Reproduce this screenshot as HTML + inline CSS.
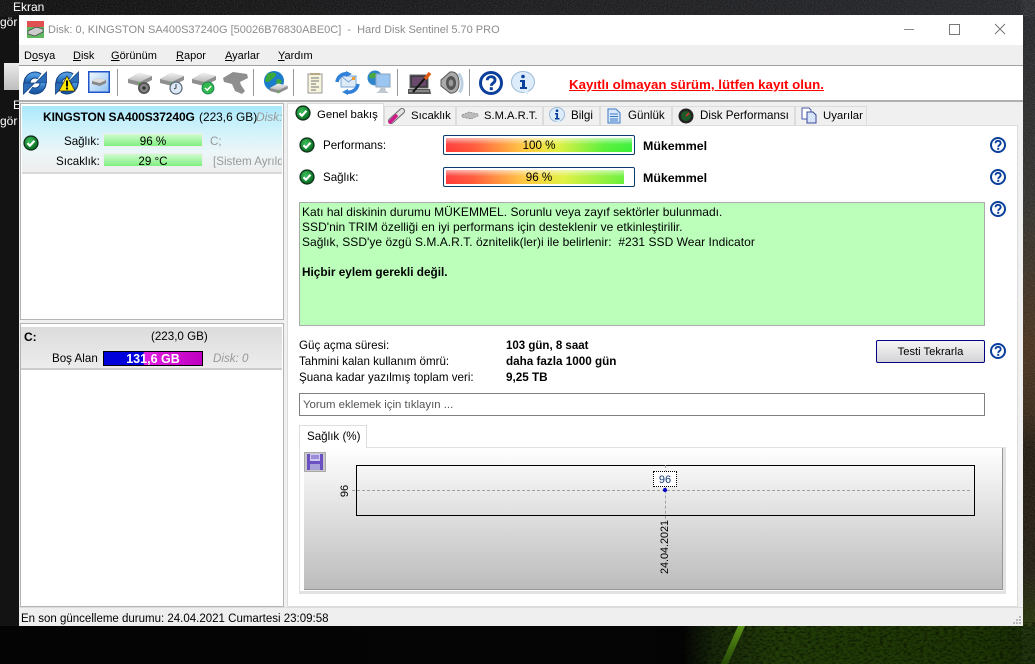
<!DOCTYPE html>
<html><head><meta charset="utf-8"><style>
html,body{margin:0;padding:0}
body{width:1035px;height:664px;overflow:hidden;position:relative;background:#0c0c0c;font-family:"Liberation Sans",sans-serif;font-size:11.6px;color:#000}
.a,.t,svg.i{position:absolute}
.t{white-space:nowrap;line-height:16px}
.l{line-height:14px}
.b{font-weight:bold}
.m{font-size:11px;top:48px}
.g{font-size:12px;letter-spacing:.03px;line-height:14px}
u{text-decoration:underline}
.tab{position:absolute;top:106px;height:19px;background:#f0f0f0;border:1px solid #dcdcdc;border-bottom:0;box-sizing:border-box}
</style></head><body>
<svg width="0" height="0" style="position:absolute"><defs>
<radialGradient id="gc" cx=".4" cy=".35" r=".7"><stop offset="0" stop-color="#3cc05a"/><stop offset="1" stop-color="#066a1e"/></radialGradient>
<linearGradient id="hd" x1="0" y1="0" x2="0" y2="1"><stop offset="0" stop-color="#f0f0f0"/><stop offset="1" stop-color="#b8b8b8"/></linearGradient>
<linearGradient id="bl" x1="0" y1="0" x2="0" y2="1"><stop offset="0" stop-color="#4f9ae0"/><stop offset="1" stop-color="#1a5aa6"/></linearGradient>
<linearGradient id="st" x1="0" y1="0" x2="0" y2="1"><stop offset="0" stop-color="#5a9216"/><stop offset="1" stop-color="#264806"/></linearGradient>
<g id="ok"><circle cx="8" cy="8" r="7.6" fill="#10301a"/><circle cx="8" cy="8" r="6.3" fill="url(#gc)"/><path d="M4.4 8.2l2.5 2.5 4.6-5" fill="none" stroke="#fff" stroke-width="2.2"/></g>
<g id="q"><circle cx="8" cy="8" r="7" fill="#fff" stroke="#0b3f9c" stroke-width="2"/><path d="M5.5 6.2c0-3.2 5.2-3.2 5.2-.1 0 2-2.5 2-2.5 3.8" fill="none" stroke="#0b3f9c" stroke-width="1.9"/><rect x="7.2" y="10.8" width="2" height="2" fill="#0b3f9c"/></g>
<g id="drive"><path d="M1 8L12 2l13 3v4L13 15 1 12z" fill="#8f8f8f"/><path d="M1 8L12 2l13 3-12 6z" fill="url(#hd)"/><rect x="11.5" y="11" width="2" height="4" fill="#5cab4a"/></g>
<g id="sync"><path d="M4 12A8 8 0 0 1 16.5 5.4" fill="none" stroke="#123f7c" stroke-width="7"/><path d="M4 12A8 8 0 0 1 16.5 5.4" fill="none" stroke="url(#bl)" stroke-width="5"/><path d="M23.5 1v11h-11z" fill="#2a6cb8" stroke="#123f7c" stroke-width=".8"/><path d="M20 12A8 8 0 0 1 7.5 18.6" fill="none" stroke="#123f7c" stroke-width="7"/><path d="M20 12A8 8 0 0 1 7.5 18.6" fill="none" stroke="url(#bl)" stroke-width="5"/><path d="M.5 23V12h11z" fill="#2a6cb8" stroke="#123f7c" stroke-width=".8"/></g>
<filter id="nz"><feTurbulence type="fractalNoise" baseFrequency=".9" numOctaves="2" seed="4"/><feColorMatrix values="0 0 0 0 1 0 0 0 0 1 0 0 0 0 1 1.2 0 0 0 -.45"/></filter>
<filter id="nd"><feTurbulence type="fractalNoise" baseFrequency=".25 .5" numOctaves="3" seed="9"/><feColorMatrix values="0 0 0 0 0 0 0 0 0 0 0 0 0 0 0 2.4 0 0 0 -1"/></filter>
</defs></svg>

<!-- desktop -->
<div class="a" style="left:0;top:0;width:1035px;height:15px;background:linear-gradient(90deg,#101010,#1a1a1c 40%,#26272b 100%)"></div>
<div class="a" style="left:0;top:0;width:19px;height:664px;background:#131313"></div>
<div class="a" style="left:1023px;top:0;width:12px;height:664px;background:linear-gradient(#26272b 0,#34332f 30%,#4a3420 52%,#3c2c1c 62%,#231c12 68%,#241f15 86%,#263608 95%,#1e2e08 100%)"></div>
<div class="a" style="left:0;top:626px;width:1035px;height:38px;background:linear-gradient(90deg,#040404 0,#050505 66%,#18290a 69%,#223c08 75%,#203a06 85%,#1e3605 95%,#182c06 100%)"></div>
<svg class="a" style="left:0;top:0" width="1035" height="664"><rect x="0" y="0" width="1035" height="15" filter="url(#nz)" opacity=".22"/><rect x="1023" y="15" width="12" height="611" filter="url(#nz)" opacity=".22"/><rect x="690" y="626" width="345" height="38" filter="url(#nd)" opacity=".6"/><path d="M738 626h7l-17 38h-7z" fill="url(#st)"/></svg>
<div class="t l" style="left:13px;top:0;color:#fff;font-size:12px">Ekran</div>
<div class="t l" style="left:0;top:15px;color:#fff;font-size:12px">gör</div>
<div class="a" style="left:4px;top:63px;width:15px;height:27px;background:linear-gradient(#ececec,#bdbdbd)"></div>
<div class="t l" style="left:13px;top:98px;color:#fff;font-size:12px">E</div>
<div class="t l" style="left:0;top:114px;color:#fff;font-size:12px">gör</div>

<!-- window -->
<div class="a" style="left:19px;top:15px;width:1004px;height:611px;background:#fff"></div>
<div class="a" style="left:19px;top:45px;width:1004px;height:20px;background:#efefef"></div>
<div class="a" style="left:19px;top:65px;width:1004px;height:1px;background:#a0a0a0"></div>
<div class="a" style="left:19px;top:100px;width:1004px;height:2px;background:#b0b0b0"></div>
<div class="a" style="left:19px;top:102px;width:1004px;height:524px;background:#f0f0f0"></div>

<svg class="i" style="left:27px;top:21px" width="17" height="17"><rect width="17" height="6" fill="#e05050"/><rect y="6" width="17" height="11" fill="#5fb860"/><path d="M1 10l8-4 7 2v3l-8 4-7-2z" fill="#ccc" stroke="#444" stroke-width=".7"/></svg>
<div class="t" style="left:48px;top:22px;color:#8c8c8c;font-size:11px">Disk: 0, KINGSTON SA400S37240G [50026B76830ABE0C] &nbsp;-&nbsp; Hard Disk Sentinel 5.70 PRO</div>
<div class="a" style="left:904px;top:29px;width:10px;height:1px;background:#8a8a8a"></div>
<div class="a" style="left:949px;top:24px;width:9px;height:9px;border:1px solid #777"></div>
<svg class="i" style="left:994px;top:23px" width="12" height="12"><path d="M1 1l10 10M11 1L1 11" stroke="#777" stroke-width="1"/></svg>

<!-- menu -->
<div class="t m" style="left:24px">D<u>o</u>sya</div>
<div class="t m" style="left:73px"><u>D</u>isk</div>
<div class="t m" style="left:111px"><u>G</u>örünüm</div>
<div class="t m" style="left:176px"><u>R</u>apor</div>
<div class="t m" style="left:225px"><u>A</u>yarlar</div>
<div class="t m" style="left:278px"><u>Y</u>ardım</div>

<!-- toolbar -->
<svg class="i" style="left:23px;top:71px" width="24" height="24"><use href="#sync"/></svg>
<svg class="i" style="left:55px;top:71px" width="24" height="24"><use href="#sync"/><path d="M12 5l8 15H4z" fill="#ffe800" stroke="#222" stroke-width=".7"/><rect x="11" y="9.5" width="2" height="6"/><rect x="11" y="16.5" width="2" height="2"/></svg>
<svg class="i" style="left:88px;top:71px" width="22" height="22"><defs><linearGradient id="sk" x1="0" y1="0" x2="1" y2="1"><stop offset="0" stop-color="#f4faff"/><stop offset="1" stop-color="#8fc0f2"/></linearGradient></defs><rect x=".75" y=".75" width="20.5" height="20.5" fill="url(#sk)" stroke="#1f55c8" stroke-width="1.5"/><path d="M4 10l6-3 8 2v3l-6 3-8-2z" fill="#888"/><path d="M4 10l6-3 8 2-6 3z" fill="#ddd"/></svg>
<div class="a" style="left:117px;top:69px;width:1px;height:27px;background:#999"></div>
<svg class="i" style="left:127px;top:71px" width="26" height="24"><use href="#drive"/><circle cx="17" cy="17" r="6" fill="#555"/><circle cx="17" cy="17" r="4" fill="#888"/><circle cx="17" cy="17" r="1.8" fill="#333"/></svg>
<svg class="i" style="left:159px;top:71px" width="26" height="24"><use href="#drive"/><circle cx="17" cy="17" r="6" fill="#dce8f5" stroke="#567" stroke-width="1.2"/><path d="M17 13v4l-2 1" stroke="#345" fill="none"/></svg>
<svg class="i" style="left:191px;top:71px" width="26" height="24"><use href="#drive"/><circle cx="17" cy="17" r="6" fill="#33b84e" stroke="#175" stroke-width=".8"/><path d="M14 17l2.2 2.2 4-4.2" fill="none" stroke="#fff" stroke-width="1.5"/></svg>
<svg class="i" style="left:223px;top:71px" width="25" height="24"><path d="M0 7L10 1l14 2 1 4-8 4 1 3 4 6-3 3-7-3-3-7-8-2z" fill="#8f8f8f"/></svg>
<div class="a" style="left:253px;top:69px;width:1px;height:27px;background:#999"></div>
<svg class="i" style="left:263px;top:71px" width="26" height="25"><circle cx="11" cy="10" r="10" fill="#1c7ccc"/><path d="M4 3c4-2 8-2 9 0s-3 4-5 6-3 3-6 1zM14 8c3 0 5 1 5 3l-4 4c-2-2-2-5-1-7z" fill="#3aa83a"/><g transform="translate(6 11) scale(.75)"><use href="#drive"/></g></svg>
<div class="a" style="left:293px;top:69px;width:1px;height:27px;background:#999"></div>
<svg class="i" style="left:307px;top:72px" width="16" height="22"><rect x="1" y="2" width="14" height="19" fill="#f6f3dc" stroke="#999"/><path d="M3 1h10v2H3z" fill="#b8a888"/><path d="M4 6h8M4 9h8M4 12h5M4 15h8M4 18h5" stroke="#777"/></svg>
<svg class="i" style="left:335px;top:71px" width="25" height="24"><rect x="6" y="5" width="15" height="11" fill="#dfeaf7" stroke="#7aa4d4"/><path d="M6 5l7.5 6L21 5" fill="none" stroke="#7aa4d4"/><path d="M2 11C3 5 8 2 13 3" fill="none" stroke="#2f80d8" stroke-width="3.5"/><path d="M17 3l-6-3v6z" fill="#2f80d8"/><path d="M23 13c-1 6-6 9-12 8" fill="none" stroke="#2f80d8" stroke-width="3.5"/><path d="M7 21l6 3v-6z" fill="#2f80d8"/><rect x="17" y="6" width="3" height="3" fill="#f0a030"/></svg>
<svg class="i" style="left:367px;top:70px" width="26" height="25"><circle cx="8" cy="8" r="7.5" fill="#2e86cc"/><path d="M2 5c3-3 7-3 7 0s-3 4-6 3z" fill="#47a83c"/><rect x="9" y="4" width="14" height="13" fill="#9cc6f2" stroke="#8ea4bc"/><path d="M14 17l-2 4-3 2h13l-3-2-1-4z" fill="#c0c8d2"/></svg>
<div class="a" style="left:397px;top:69px;width:1px;height:27px;background:#999"></div>
<svg class="i" style="left:408px;top:71px" width="24" height="24"><rect x="2" y="4" width="18" height="13" fill="#3a3a40" stroke="#666"/><rect x="4" y="6" width="14" height="9" fill="#6a4a6a"/><path d="M0 18h22l1 5H0z" fill="#555"/><path d="M1 20h20" stroke="#bbb"/><path d="M5 21L18 6" stroke="#111" stroke-width="2"/><path d="M17 8l5-6" stroke="#e05a10" stroke-width="3.4"/></svg>
<svg class="i" style="left:440px;top:71px" width="24" height="24"><path d="M17 3c4 3 5 13 1 18l3 1c4-6 3-15-1-20z" fill="#bcd0e2"/><path d="M1 9l9-8c7-1 9 5 9 11s-3 11-9 10L1 15z" fill="#aaa" stroke="#555"/><ellipse cx="11" cy="12" rx="5" ry="7" fill="#555"/><ellipse cx="11" cy="12" rx="2.4" ry="3.5" fill="#999"/></svg>
<div class="a" style="left:469px;top:69px;width:1px;height:27px;background:#999"></div>
<svg class="i" style="left:479px;top:71px" width="24" height="24" viewBox="0 0 16 16"><use href="#q"/></svg>
<svg class="i" style="left:511px;top:71px" width="25" height="25"><ellipse cx="12" cy="11" rx="11.5" ry="10.5" fill="#dcecfb" stroke="#9dbad8"/><path d="M11 20l6 4v-6z" fill="#dcecfb"/><circle cx="12" cy="5.5" r="1.8" fill="#0a3f9c"/><path d="M9 9h5v7h2v2H9v-2h2v-5H9z" fill="#0a3f9c"/></svg>
<div class="t b l" style="left:569px;top:78px;color:#f00;font-size:13.3px;text-decoration:underline">Kayıtlı olmayan sürüm, lütfen kayıt olun.</div>

<!-- left panel -->
<div class="a" style="left:20px;top:103px;width:264px;height:217px;background:#fff;border:1px solid #b4b4b4;box-sizing:border-box"></div>
<div class="a" style="left:22px;top:106px;width:260px;height:66px;background:linear-gradient(#a8e8fb 0,#c6f0fb 25%,#ecf6f8 70%,#eee 100%);border-bottom:2px solid #d8d8d8"></div>
<div class="t b l" style="left:43px;top:110px;font-size:12px;letter-spacing:-.1px">KINGSTON SA400S37240G</div>
<div class="t l" style="left:199px;top:110px;font-size:11.9px">(223,6 GB)</div>
<div class="t l" style="left:256px;top:110px;width:26px;overflow:hidden;color:#999;font-style:italic;font-size:11.9px">Disk: 0</div>
<svg class="i" style="left:23px;top:135px" width="16" height="16"><use href="#ok"/></svg>
<div class="t" style="left:64px;top:134px">Sağlık:</div>
<div class="a" style="left:103px;top:133px;width:100px;height:14px;background:linear-gradient(#d0fbd0,#80f080);border:1px solid #eee;box-sizing:border-box"></div>
<div class="t" style="left:103px;top:134px;width:100px;text-align:center">96 %</div>
<div class="t" style="left:210px;top:134px;color:#999">C;</div>
<div class="t" style="left:56px;top:154px">Sıcaklık:</div>
<div class="a" style="left:103px;top:153px;width:100px;height:14px;background:linear-gradient(#d0fbd0,#80f080);border:1px solid #eee;box-sizing:border-box"></div>
<div class="t" style="left:103px;top:154px;width:100px;text-align:center">29 °C</div>
<div class="t" style="left:213px;top:154px;width:69px;overflow:hidden;color:#999">[Sistem Ayrıldı]</div>

<div class="a" style="left:20px;top:323px;width:264px;height:284px;background:#fff;border:1px solid #b4b4b4;box-sizing:border-box"></div>
<div class="a" style="left:21px;top:327px;width:261px;height:41px;background:linear-gradient(#dcdcdc,#ececec);border-bottom:2px solid #ccc"></div>
<div class="t b l" style="left:24px;top:330px;font-size:12px">C:</div>
<div class="t" style="left:151px;top:329px">(223,0 GB)</div>
<div class="t" style="left:52px;top:351px">Boş Alan</div>
<div class="a" style="left:103px;top:351px;width:100px;height:15px;background:linear-gradient(90deg,#0000d8 0,#0000e0 40%,#e020e0 41%,#c000c0 100%);border:1px solid #000;box-sizing:border-box"></div>
<div class="t b l" style="left:103px;top:352px;width:100px;text-align:center;color:#fff;font-size:12.5px">131,6 GB</div>
<div class="t" style="left:213px;top:351px;color:#999;font-style:italic">Disk: 0</div>

<!-- tabs -->
<div class="a" style="left:287px;top:125px;width:731px;height:482px;background:#fff;border:1px solid #dcdcdc;box-sizing:border-box"></div>
<div class="a" style="left:287px;top:103px;width:97px;height:23px;background:#fff;border:1px solid #dcdcdc;border-bottom:0;box-sizing:border-box"></div>
<svg class="i" style="left:295px;top:105px" width="16" height="16"><use href="#ok"/></svg>
<div class="t" style="left:317px;top:107px;font-size:11.4px">Genel bakış</div>

<div class="tab" style="left:384px;width:72px"></div>
<svg class="i" style="left:388px;top:108px" width="17" height="16"><path d="M3 13L14 3" stroke="#666" stroke-width="6" stroke-linecap="round"/><path d="M3 13L14 3" stroke="#e4e4e4" stroke-width="4" stroke-linecap="round"/><path d="M2 14l6-6" stroke="#d01888" stroke-width="3.4" stroke-linecap="round"/></svg>
<div class="t" style="left:411px;top:108px;font-size:11.4px">Sıcaklık</div>
<div class="tab" style="left:456px;width:87px"></div>
<svg class="i" style="left:461px;top:111px" width="18" height="9"><path d="M1 4l7-3 9 2v2l-7 3-9-2z" fill="#bbb" stroke="#777" stroke-width=".6" stroke-dasharray="2 1"/></svg>
<div class="t" style="left:484px;top:108px;font-size:11.2px">S.M.A.R.T.</div>
<div class="tab" style="left:543px;width:57px"></div>
<svg class="i" style="left:549px;top:107px" width="16" height="17"><ellipse cx="8" cy="7.5" rx="7.5" ry="7" fill="#dcecfb" stroke="#9dbad8"/><path d="M7 14l4 3v-4z" fill="#dcecfb"/><circle cx="8" cy="3.7" r="1.3" fill="#0a3f9c"/><path d="M6 6h3v5h1.5v1.5H6V11h1.2V7.5H6z" fill="#0a3f9c"/></svg>
<div class="t" style="left:571px;top:108px">Bilgi</div>
<div class="tab" style="left:600px;width:72px"></div>
<svg class="i" style="left:607px;top:108px" width="14" height="16"><path d="M1 1h8l4 4v10H1z" fill="#d8e8fa" stroke="#3c78c8"/><path d="M3 6h8M3 8.5h8M3 11h8M3 13h8" stroke="#3c78c8"/></svg>
<div class="t" style="left:628px;top:108px">Günlük</div>
<div class="tab" style="left:672px;width:123px"></div>
<svg class="i" style="left:678px;top:108px" width="16" height="16"><circle cx="8" cy="8" r="7.5" fill="#222"/><circle cx="8" cy="8" r="5" fill="#1c5a2a"/><path d="M8 8l3-3" stroke="#e03030" stroke-width="1.5"/></svg>
<div class="t" style="left:700px;top:108px">Disk Performansı</div>
<div class="tab" style="left:795px;width:72px"></div>
<svg class="i" style="left:801px;top:107px" width="16" height="17"><path d="M1 1h7l2 2v9H1z" fill="#fff" stroke="#4a5aa8"/><path d="M6 5h6l3 3v8H6z" fill="#d8e4fa" stroke="#3a4a98"/></svg>
<div class="t" style="left:823px;top:108px;font-size:11.4px">Uyarılar</div>

<!-- overview -->
<svg class="i" style="left:299px;top:137px" width="16" height="16"><use href="#ok"/></svg>
<div class="t" style="left:323px;top:138px">Performans:</div>
<div class="a" style="left:443px;top:135px;width:192px;height:20px;background:#fff;border:1px solid #0c3c6c;border-radius:2px;box-sizing:border-box"></div>
<div class="a" style="left:446px;top:138px;width:186px;height:14px;background:linear-gradient(rgba(255,255,255,.6),rgba(255,255,255,.05) 45%,rgba(255,255,255,0)),linear-gradient(90deg,#ff3838 0,#ff5838 15%,#ffc840 42%,#e0f040 60%,#58f038 85%,#38f038 100%)"></div>
<div class="t" style="left:443px;top:138px;width:192px;text-align:center">100 %</div>
<div class="t b l" style="left:643px;top:139px;font-size:12.4px">Mükemmel</div>
<svg class="i" style="left:990px;top:137px" width="16" height="16"><use href="#q"/></svg>

<svg class="i" style="left:299px;top:169px" width="16" height="16"><use href="#ok"/></svg>
<div class="t" style="left:323px;top:170px">Sağlık:</div>
<div class="a" style="left:443px;top:167px;width:192px;height:20px;background:#fff;border:1px solid #0c3c6c;border-radius:2px;box-sizing:border-box"></div>
<div class="a" style="left:446px;top:170px;width:178px;height:14px;background:linear-gradient(rgba(255,255,255,.6),rgba(255,255,255,.05) 45%,rgba(255,255,255,0)),linear-gradient(90deg,#ff3838 0,#ff5838 15%,#ffc840 44%,#e0f040 66%,#68f038 100%)"></div>
<div class="t" style="left:443px;top:170px;width:192px;text-align:center">96 %</div>
<div class="t b l" style="left:643px;top:171px;font-size:12.4px">Mükemmel</div>
<svg class="i" style="left:990px;top:169px" width="16" height="16"><use href="#q"/></svg>

<div class="a" style="left:299px;top:202px;width:686px;height:124px;background:#bbffbb;border:1px solid #aaa;box-sizing:border-box"></div>
<div class="t g" style="left:302px;top:205px">Katı hal diskinin durumu MÜKEMMEL. Sorunlu veya zayıf sektörler bulunmadı.</div>
<div class="t g" style="left:302px;top:220px">SSD'nin TRIM özelliği en iyi performans için desteklenir ve etkinleştirilir.</div>
<div class="t g" style="left:302px;top:235px">Sağlık, SSD'ye özgü S.M.A.R.T. öznitelik(ler)i ile belirlenir: &nbsp;#231 SSD Wear Indicator</div>
<div class="t b" style="left:302px;top:264px;font-size:11.8px">Hiçbir eylem gerekli değil.</div>
<svg class="i" style="left:990px;top:201px" width="16" height="16"><use href="#q"/></svg>

<div class="t" style="left:299px;top:338px">Güç açma süresi:</div>
<div class="t b" style="left:506px;top:338px;font-size:11.5px">103 gün, 8 saat</div>
<div class="t" style="left:299px;top:354px">Tahmini kalan kullanım ömrü:</div>
<div class="t b" style="left:506px;top:354px;font-size:11.7px">daha fazla 1000 gün</div>
<div class="t" style="left:299px;top:370px">Şuana kadar yazılmış toplam veri:</div>
<div class="t b" style="left:506px;top:370px;font-size:11.7px">9,25 TB</div>
<div class="a" style="left:876px;top:340px;width:109px;height:23px;background:linear-gradient(#f6f6f6,#d4d4d8);border:1px solid #000080;border-radius:2px;box-sizing:border-box"></div>
<div class="t l" style="left:876px;top:345px;width:109px;text-align:center;font-size:11.2px">Testi Tekrarla</div>
<svg class="i" style="left:990px;top:343px" width="16" height="16"><use href="#q"/></svg>

<div class="a" style="left:299px;top:393px;width:686px;height:23px;background:#fff;border:1px solid #808080;box-sizing:border-box"></div>
<div class="t" style="left:303px;top:397px;color:#555;font-size:11.4px">Yorum eklemek için tıklayın ...</div>

<!-- chart -->
<div class="a" style="left:299px;top:447px;width:707px;height:147px;border:1px solid #e2e2e2;border-right-width:3px;border-bottom-width:3px;box-sizing:border-box"></div>
<div class="a" style="left:299px;top:425px;width:68px;height:23px;background:#fff;border:1px solid #dedede;border-bottom:0;box-sizing:border-box"></div>
<div class="t" style="left:307px;top:429px">Sağlık (%)</div>
<div class="a" style="left:304px;top:448px;width:699px;height:142px;background:linear-gradient(#fff,#bcbcbc);border-right:1px solid #999;border-bottom:1px solid #999;box-sizing:border-box"></div>
<div class="a" style="left:304px;top:452px;width:22px;height:20px;background:#c8c8c8;border:1px solid #aaa;box-sizing:border-box"></div>
<svg class="i" style="left:307px;top:453px" width="16" height="17"><path d="M0 1h16v16H0z" fill="#6a50c0"/><rect x="3" y="1" width="10" height="7" fill="#cfc8f0"/><path d="M4 3h8M4 5h8" stroke="#6a50c0"/><rect x="3" y="11" width="10" height="6" fill="#a8a0d8"/></svg>
<div class="a" style="left:356px;top:465px;width:619px;height:51px;border:1px solid #000;box-sizing:border-box"></div>
<div class="a" style="left:352px;top:490px;width:618px;border-top:1px dashed #a0a0a0"></div>
<div class="a" style="left:665px;top:465px;height:64px;border-left:1px dashed #a0a0a0"></div>
<div class="t l" style="left:338px;top:484px;width:14px;height:14px;transform:rotate(-90deg);text-align:center;font-size:11px">96</div>
<div class="a" style="left:653px;top:471px;width:24px;height:16px;background:#fff;border:1px dotted #000;box-sizing:border-box"></div>
<div class="t l" style="left:653px;top:473px;width:24px;text-align:center;color:#123a78;font-size:11px">96</div>
<div class="a" style="left:663px;top:488px;width:4px;height:4px;border-radius:50%;background:#0000c8"></div>
<div class="t l" style="left:631px;top:540px;width:68px;text-align:center;transform:rotate(-90deg);font-size:10.8px">24.04.2021</div>

<!-- status -->
<div class="a" style="left:19px;top:607px;width:1004px;height:19px;background:#efefef;border-top:1px solid #dcdcdc;box-sizing:border-box"></div>
<div class="t" style="left:21px;top:611px;font-size:11.5px">En son güncelleme durumu: 24.04.2021 Cumartesi 23:09:58</div>
<svg class="i" style="left:1012px;top:615px" width="10" height="10"><path d="M7 1h2v2H7zM4 4h2v2H4zM7 4h2v2H7zM1 7h2v2H1zM4 7h2v2H4zM7 7h2v2H7z" fill="#b8b8b8"/></svg>
</body></html>
